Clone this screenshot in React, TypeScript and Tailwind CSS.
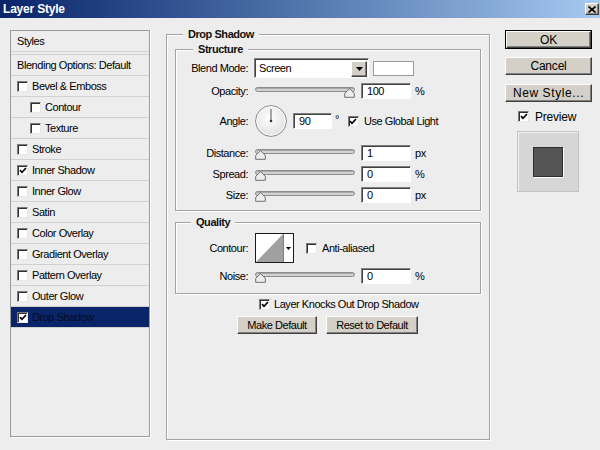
import React from "react";

const Check = () => (
  <svg width="8" height="7" viewBox="0 0 8 7" className="block">
    <path d="M1 3.2 L3 5.3 L7 1" fill="none" stroke="#000" strokeWidth="1.7" />
  </svg>
);

function CheckBox({ checked }: { checked?: boolean }) {
  return (
    <span className="flex items-center justify-center w-[11px] h-[11px] shrink-0 bg-white border border-t-[#7a7a7a] border-l-[#7a7a7a] border-b-[#e6e6e6] border-r-[#e6e6e6] shadow-[inset_1px_1px_0_#303030]">
      {checked && <Check />}
    </span>
  );
}

function Field({ value, w }: { value: string; w: string }) {
  return (
    <div
      className={`${w} h-[16px] shrink-0 bg-white border border-t-[#808080] border-l-[#808080] border-b-white border-r-white shadow-[inset_1px_1px_0_#404040] flex items-center pl-[5px]`}
    >
      {value}
    </div>
  );
}

function Btn({ children, className }: { children: React.ReactNode; className: string }) {
  return (
    <div
      className={`flex items-center justify-center bg-[#d4d0c8] border border-t-white border-l-white border-b-[#404040] border-r-[#404040] shadow-[inset_-1px_-1px_0_#808080] ${className}`}
    >
      {children}
    </div>
  );
}

function Group({
  title,
  className,
  titleMl,
  children,
}: {
  title: string;
  className: string;
  titleMl: string;
  children?: React.ReactNode;
}) {
  return (
    <div className={`border border-[#a3a3a3] shadow-[inset_1px_1px_0_#ffffff,1px_1px_0_#ffffff] ${className}`}>
      <div className={`-mt-[7px] ${titleMl} px-[5px] w-fit h-[13px] leading-[13px] bg-[#ededed] font-bold text-[#111]`}>
        {title}
      </div>
      {children}
    </div>
  );
}

function Label({ children }: { children: React.ReactNode }) {
  return <div className="w-[72px] shrink-0 text-right">{children}</div>;
}

function Slider({ pos }: { pos: "left" | "right" }) {
  return (
    <div className="relative w-[100px] h-[16px] ml-[7px] shrink-0">
      <div className="mt-[4px] h-[5px] rounded-full bg-[#d2d2d2] border border-[#8c8c8c] shadow-[inset_0_1px_0_#a8a8a8]"></div>
      <svg
        className={`absolute top-[5px] ${pos === "left" ? "left-0" : "right-0"}`}
        width="11"
        height="10"
        viewBox="0 0 11 10"
      >
        <path
          d="M5.5 0.7 L10.3 5.3 V9.3 H0.7 V5.3 Z"
          fill="#eeeeee"
          stroke="#6e6e6e"
          strokeLinejoin="round"
        />
      </svg>
    </div>
  );
}

const items: { label: string; indent?: boolean; checked?: boolean; selected?: boolean }[] = [
  { label: "Bevel & Emboss" },
  { label: "Contour", indent: true },
  { label: "Texture", indent: true },
  { label: "Stroke" },
  { label: "Inner Shadow", checked: true },
  { label: "Inner Glow" },
  { label: "Satin" },
  { label: "Color Overlay" },
  { label: "Gradient Overlay" },
  { label: "Pattern Overlay" },
  { label: "Outer Glow" },
  { label: "Drop Shadow", checked: true, selected: true },
];

export default function App() {
  return (
    <div className="w-[600px] h-[450px] bg-[#ededed] overflow-hidden font-['Liberation_Sans',Arial,sans-serif] text-[11px] tracking-[-0.45px] text-black">
      {/* Title bar */}
      <div className="h-[18px] bg-linear-to-r from-[#0a246a] to-[#a6caf0] flex items-center justify-between pl-[3px] pr-[1px]">
        <span className="text-white font-bold text-[12px] tracking-[-0.2px]">Layer Style</span>
        <Btn className="w-[14px] h-[12px]">
          <svg width="8" height="7" viewBox="0 0 8 7">
            <path d="M0.5 0.5 L7.5 6.5 M7.5 0.5 L0.5 6.5" stroke="#000" strokeWidth="1.6" />
          </svg>
        </Btn>
      </div>

      <div className="flex items-start">
        {/* Left list */}
        <div className="ml-[10px] mt-[12px] w-[140px] h-[407px] border border-[#9a9a9a] shadow-[1px_1px_0_#ffffff] flex flex-col">
          <div className="h-[21px] shrink-0 border-b border-b-[#d0d0d0] flex items-center pl-[6px]">Styles</div>
          <div className="mt-[2px] h-[22px] shrink-0 border-t border-b border-[#d0d0d0] flex items-center pl-[6px]">
            Blending Options: Default
          </div>
          {items.map((it) => (
            <div
              key={it.label}
              className={`h-[21px] shrink-0 border-b border-b-[#d0d0d0] flex items-center ${
                it.indent ? "pl-[19px]" : "pl-[6px]"
              } ${it.selected ? "bg-[#0a246a] text-[#050c24]" : ""}`}
            >
              <CheckBox checked={it.checked} />
              <span className="ml-[4px]">{it.label}</span>
            </div>
          ))}
        </div>

        {/* Center panel */}
        <Group title="Drop Shadow" className="ml-[16px] mt-[16px] w-[324px] h-[406px] shrink-0" titleMl="ml-[16px]">
          <Group title="Structure" className="ml-[8px] mt-[8px] w-[306px] h-[162px]" titleMl="ml-[17px]">
            {/* Blend mode */}
            <div className="mt-[2px] h-[20px] flex items-center">
              <Label>Blend Mode:</Label>
              <div className="ml-[6px] w-[115px] h-[20px] shrink-0 bg-white border border-t-[#808080] border-l-[#808080] border-b-white border-r-white shadow-[inset_1px_1px_0_#404040] flex items-center">
                <span className="pl-[4px] flex-1">Screen</span>
                <Btn className="w-[16px] h-[16px] mr-[1px] mt-[1px]">
                  <svg width="7" height="4" viewBox="0 0 7 4">
                    <path d="M0 0 H7 L3.5 4 Z" fill="#000" />
                  </svg>
                </Btn>
              </div>
              <div className="ml-[4px] w-[41px] h-[15px] bg-white border border-[#9a9a9a]"></div>
            </div>
            {/* Opacity */}
            <div className="mt-[5px] h-[16px] flex items-center">
              <Label>Opacity:</Label>
              <Slider pos="right" />
              <div className="ml-[6px]">
                <Field value="100" w="w-[50px]" />
              </div>
              <span className="ml-[4px]">%</span>
            </div>
            {/* Angle */}
            <div className="mt-[6px] h-[32px] flex items-center">
              <Label>Angle:</Label>
              <svg width="32" height="32" viewBox="0 0 32 32" className="ml-[7px] shrink-0">
                <defs>
                  <radialGradient id="dg" cx="45%" cy="40%" r="65%">
                    <stop offset="0" stopColor="#ffffff" />
                    <stop offset="1" stopColor="#dedede" />
                  </radialGradient>
                </defs>
                <circle cx="16" cy="16" r="15.4" fill="url(#dg)" stroke="#8a8a8a" />
                <circle cx="16" cy="16" r="14.2" fill="none" stroke="#ffffff" />
                <line x1="16" y1="16" x2="16" y2="4" stroke="#555" strokeWidth="1" />
                <circle cx="16" cy="16" r="1.3" fill="#333" />
              </svg>
              <div className="ml-[6px]">
                <Field value="90" w="w-[39px]" />
              </div>
              <span className="ml-[3px] mt-[-4px]">°</span>
              <div className="ml-[9px] flex items-center">
                <CheckBox checked />
                <span className="ml-[5px]">Use Global Light</span>
              </div>
            </div>
            {/* Distance */}
            <div className="mt-[8px] h-[16px] flex items-center">
              <Label>Distance:</Label>
              <Slider pos="left" />
              <div className="ml-[6px]">
                <Field value="1" w="w-[50px]" />
              </div>
              <span className="ml-[4px]">px</span>
            </div>
            {/* Spread */}
            <div className="mt-[5px] h-[16px] flex items-center">
              <Label>Spread:</Label>
              <Slider pos="left" />
              <div className="ml-[6px]">
                <Field value="0" w="w-[50px]" />
              </div>
              <span className="ml-[4px]">%</span>
            </div>
            {/* Size */}
            <div className="mt-[5px] h-[16px] flex items-center">
              <Label>Size:</Label>
              <Slider pos="left" />
              <div className="ml-[6px]">
                <Field value="0" w="w-[50px]" />
              </div>
              <span className="ml-[4px]">px</span>
            </div>
          </Group>

          <Group title="Quality" className="ml-[8px] mt-[11px] w-[306px] h-[72px]" titleMl="ml-[15px]">
            <div className="mt-[4px] h-[30px] flex items-center">
              <Label>Contour:</Label>
              <div className="ml-[7px] w-[39px] h-[30px] shrink-0 border border-[#1a1a1a] bg-white flex">
                <svg width="27" height="28" viewBox="0 0 27 28" className="block">
                  <path d="M0 28 L27 0 V28 Z" fill="#a0a0a0" />
                </svg>
                <div className="w-[10px] h-[28px] border-l border-l-[#808080] flex items-center justify-center">
                  <svg width="5" height="3" viewBox="0 0 5 3">
                    <path d="M0 0 H5 L2.5 3 Z" fill="#000" />
                  </svg>
                </div>
              </div>
              <div className="ml-[12px] flex items-center">
                <CheckBox />
                <span className="ml-[5px]">Anti-aliased</span>
              </div>
            </div>
            <div className="mt-[5px] h-[16px] flex items-center">
              <Label>Noise:</Label>
              <Slider pos="left" />
              <div className="ml-[6px]">
                <Field value="0" w="w-[50px]" />
              </div>
              <span className="ml-[4px]">%</span>
            </div>
          </Group>

          <div className="ml-[92px] mt-[3px] h-[14px] flex items-center">
            <CheckBox checked />
            <span className="ml-[4px]">Layer Knocks Out Drop Shadow</span>
          </div>

          <div className="ml-[70px] mt-[5px] flex gap-[9px]">
            <Btn className="w-[80px] h-[18px]">Make Default</Btn>
            <Btn className="w-[92px] h-[18px]">Reset to Default</Btn>
          </div>
        </Group>

        {/* Right column */}
        <div className="ml-[15px] mt-[12px] w-[87px] flex flex-col text-[12px] tracking-[-0.2px]">
          <div className="h-[19px] border border-black flex">
            <Btn className="flex-1">OK</Btn>
          </div>
          <Btn className="mt-[8px] h-[18px]">Cancel</Btn>
          <Btn className="mt-[9px] h-[18px] tracking-[0.6px]">New Style...</Btn>
          <div className="mt-[8px] h-[13px] ml-[13px] flex items-center">
            <CheckBox checked />
            <span className="ml-[6px]">Preview</span>
          </div>
          <div className="mt-[8px] ml-[12px] w-[62px] h-[61px] bg-[#d6d6d6] border border-[#c2c2c2] shadow-[inset_1px_1px_0_#f2f2f2] flex items-center justify-center">
            <div className="w-[30px] h-[30px] bg-[#555555] border border-[#2e2e2e] shadow-[1px_1px_0_#ffffff]"></div>
          </div>
        </div>
      </div>
    </div>
  );
}
